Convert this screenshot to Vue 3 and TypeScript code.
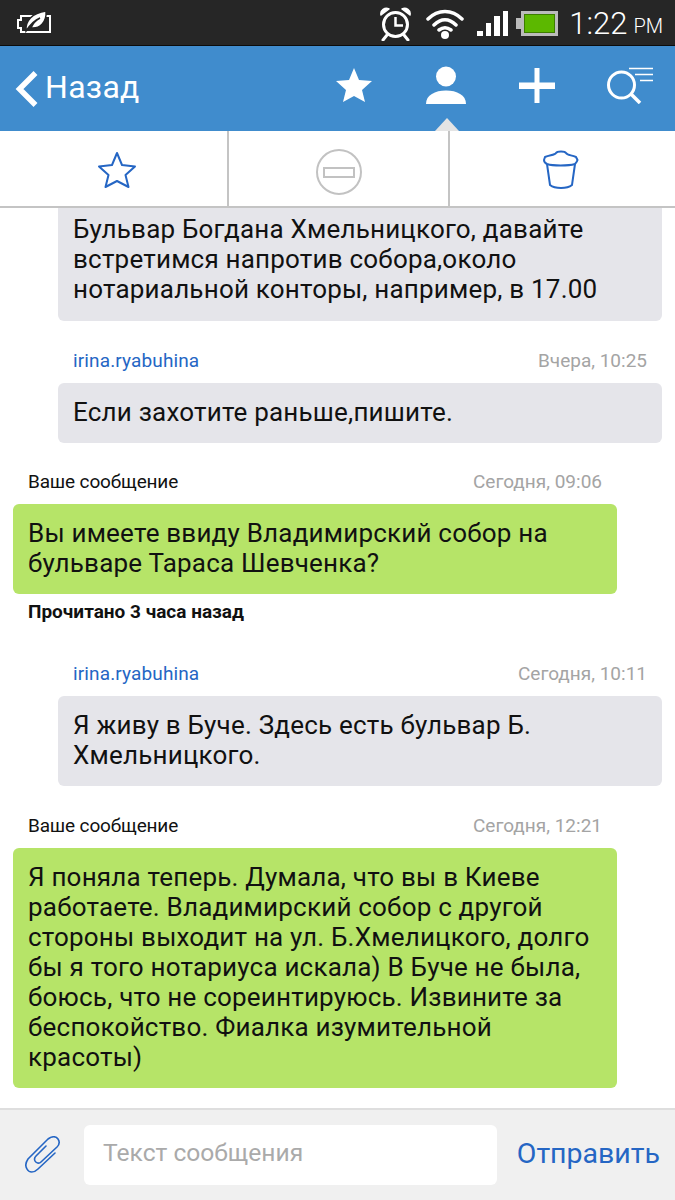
<script setup lang="ts">
interface Msg { mine: boolean; author?: string; time?: string; lines: string[]; read?: string }
const messages: Msg[] = [
  { mine: false, lines: ['Бульвар Богдана Хмельницкого, давайте', 'встретимся напротив собора,около', 'нотариальной конторы, например, в 17.00'] },
  { mine: false, author: 'irina.ryabuhina', time: 'Вчера, 10:25', lines: ['Если захотите раньше,пишите.'] },
  { mine: true, author: 'Ваше сообщение', time: 'Сегодня, 09:06', lines: ['Вы имеете ввиду Владимирский собор на', 'бульваре Тараса Шевченка?'], read: 'Прочитано 3 часа назад' },
  { mine: false, author: 'irina.ryabuhina', time: 'Сегодня, 10:11', lines: ['Я живу в Буче. Здесь есть бульвар Б.', 'Хмельницкого.'] },
  { mine: true, author: 'Ваше сообщение', time: 'Сегодня, 12:21', lines: ['Я поняла теперь. Думала, что вы в Киеве', 'работаете. Владимирский собор с другой', 'стороны выходит на ул. Б.Хмелицкого, долго', 'бы я того нотариуса искала) В Буче не была,', 'боюсь, что не сореинтируюсь. Извините за', 'беспокойство. Фиалка изумительной', 'красоты)'] }
]
</script>

<template>
  <div class="page">
    <header class="status">
      <svg class="leaf" width="36" height="24" viewBox="0 0 36 24">
        <path d="M5 6H34V22H5V18H2V10H5Z" fill="none" stroke="#fff" stroke-width="2" />
        <path d="M10 21C9 11 16 3 30 1C31 12 24 19 15 18C17 13 20 10 24 8C19 10 14 15 10 21Z" fill="#fff" stroke="#242424" stroke-width="1.500" />
      </svg>
      <div class="status-right">
        <svg width="33" height="34" viewBox="0 0 33 34">
          <circle cx="16.500" cy="17.500" r="12" fill="none" stroke="#fff" stroke-width="3" />
          <path d="M16.500 10V18.500H24" fill="none" stroke="#fff" stroke-width="2.500" />
          <path d="M2 8C1 3 6 0 10 2ZM31 8C32 3 27 0 23 2Z" fill="#fff" stroke="#fff" stroke-width="1.500" stroke-linejoin="round" />
          <path d="M8 28L4 33M25 28L29 33" stroke="#fff" stroke-width="3" stroke-linecap="round" />
        </svg>
        <svg class="wifi" width="38" height="32" viewBox="0 0 38 32">
          <path d="M2 11C12 1 26 1 36 11M8 17C15 10 23 10 30 17M13 22C17 19 21 19 25 22" fill="none" stroke="#fff" stroke-width="3.500" stroke-linecap="round" />
          <circle cx="19" cy="27" r="4" fill="#fff" />
        </svg>
        <div class="bars">
          <i class="b1"></i><i class="b2"></i><i class="b3"></i><i class="b4"></i>
        </div>
        <svg class="batt" width="42" height="25" viewBox="0 0 42 25">
          <rect x="5" y="0" width="37" height="25" fill="#bbb" />
          <rect x="0" y="7" width="6" height="11" fill="#bbb" />
          <rect x="8.500" y="3.500" width="30" height="18" fill="#5cb800" stroke="#3d7d00" />
        </svg>
        <span class="clock">1:22</span><span class="ampm">PM</span>
      </div>
    </header>

    <nav class="nav">
      <div class="back">
        <svg class="chev" width="24" height="40" viewBox="0 0 24 40">
          <path d="M20.500 4L4.500 20L20.500 36" fill="none" stroke="#fff" stroke-width="5.500" />
        </svg>
        <span>Назад</span>
      </div>
      <div class="nav-icons">
        <svg class="ni" width="38" height="36" viewBox="0 0 38 36">
          <path d="M19 1L24 13L37 14L27 23L30 35L19 29L8 35L11 23L1 14L14 13Z" fill="#fff" />
        </svg>
        <svg class="ni" width="42" height="40" viewBox="0 0 42 40">
          <circle cx="21" cy="11.500" r="10" fill="#fff" />
          <path d="M1 39C1 30 10 25.500 21 25.500C32 25.500 41 30 41 39Z" fill="#fff" />
        </svg>
        <svg class="ni" width="36" height="36" viewBox="0 -1 36 36">
          <path d="M15.500 0H20.500V14.500H36V21H20.500V35H15.500V21H0V14.500H15.500Z" fill="#fff" />
        </svg>
        <svg width="48" height="38" viewBox="0 0 48 38">
          <circle cx="15.500" cy="19" r="13" fill="none" stroke="#fff" stroke-width="3" />
          <path d="M25 28L34 37" stroke="#fff" stroke-width="3.500" />
          <path d="M23 2.500H47M29 8.500H47M34 14.500H47" stroke="#fff" stroke-width="1.500" />
        </svg>
      </div>
      <span class="caret"></span>
    </nav>

    <div class="tools">
      <div class="tool">
        <svg class="t-star" width="40" height="38" viewBox="0 0 40 38">
          <path d="M20 2L25 14L38 15.500L28.500 24L31.500 36L20 30L8.500 36L11.500 24L2 15.500L15 14Z" fill="none" stroke="#2566c4" stroke-width="2" stroke-linejoin="round" />
        </svg>
      </div>
      <div class="tool tool-mid">
        <svg class="t-block" width="46" height="46" viewBox="0 0 46 46">
          <circle cx="23" cy="23" r="22" fill="none" stroke="#c2c2c2" stroke-width="2" />
          <rect x="8" y="19" width="30" height="9" fill="none" stroke="#c2c2c2" stroke-width="2" />
        </svg>
      </div>
      <div class="tool">
        <svg class="t-trash" width="36" height="40" viewBox="0 0 36 40">
          <path d="M13 3C14 1 22 1 23 3C24 5 28 5 33 7L34.500 10C34 12 33 13 32 14C25 16 10 16 4 14C2 13 1 12 1 10L2 7C7 5 12 5 13 3Z" fill="none" stroke="#2566c4" stroke-width="2" stroke-linejoin="round" />
          <path d="M4 14L7 35C12 39 24 39 29 35L32 14" fill="none" stroke="#2566c4" stroke-width="2" />
        </svg>
      </div>
    </div>

    <main class="list">
      <section v-for="(m, i) in messages" :key="i" class="msg" :class="{ mine: m.mine, first: i === 0 }">
        <div v-if="m.author" class="meta">
          <span class="author">{{ m.author }}</span>
          <span class="time">{{ m.time }}</span>
        </div>
        <div class="bubble">
          <div v-for="l in m.lines" :key="l">{{ l }}</div>
        </div>
        <div v-if="m.read" class="read">{{ m.read }}</div>
      </section>
    </main>

    <footer class="composer">
      <svg class="clip" width="36" height="38" viewBox="10 10 36 38">
        <path d="M40 27L23 43C19 47 14 47 12 43C10 40 11 36 13 33L33 13C37 10 41 10 43 13C45 16 44 19 42 21L26 36C24 38 21 37 20 35C19 33 20 31 21 30L31 20" fill="none" stroke="#2566c4" stroke-width="1.600" stroke-linecap="round" />
      </svg>
      <div class="input"><span class="ph">Текст сообщения</span></div>
      <span class="send">Отправить</span>
    </footer>
  </div>
</template>

<style>
body { margin: 0; }
</style>

<style scoped>
.page {
  width: 675px;
  height: 1200px;
  overflow: hidden;
  display: flex;
  flex-direction: column;
  background: #fff;
  font-family: Roboto, "Noto Sans", sans-serif;
  color: #111;
}
.status {
  height: 46px;
  flex: none;
  box-sizing: border-box;
  background: #262626;
  border-bottom: 1px solid #0c0c0c;
  display: flex;
  align-items: center;
  justify-content: space-between;
  padding: 2px 12px 0 16px;
}
.leaf { margin-top: -4px; }
.status-right { display: flex; align-items: center; }
.status-right svg { flex: none; }
.wifi { margin-left: 14px; }
.bars { display: flex; align-items: flex-end; gap: 3px; height: 25px; margin-left: 13px; }
.bars i { display: block; width: 5.5px; background: #fff; }
.b1 { height: 5px; }
.b2 { height: 13px; }
.b3 { height: 20px; }
.b4 { height: 25px; }
.batt { margin-left: 8px; }
.clock { color: #fff; font-size: 31px; font-weight: 300; margin-left: 11px; line-height: 1; }
.ampm { color: #fff; font-size: 20px; font-weight: 300; margin-left: 6px; margin-top: 5px; }
.nav {
  position: relative;
  height: 85px;
  flex: none;
  box-sizing: border-box;
  background: #408ccd;
  display: flex;
  align-items: center;
  justify-content: space-between;
  padding: 0 0 4px 15px;
}
.back { display: flex; align-items: center; gap: 6px; color: #fff; font-size: 32px; letter-spacing: 0.3px; }
.chev { margin-top: 4px; }
.nav-icons { display: flex; align-items: center; margin: 0 21px 4px 0; }
.ni { margin-right: 52px; }
.ni:nth-child(3) { margin-right: 51px; }
.caret {
  position: absolute;
  left: 435px;
  bottom: 0;
  border-left: 12px solid transparent;
  border-right: 12px solid transparent;
  border-bottom: 13px solid #e4e4e4;
}
.tools {
  height: 77px;
  flex: none;
  box-sizing: border-box;
  border-bottom: 2px solid #c4c4c4;
  display: grid;
  grid-template-columns: 227px 223px 1fr;
}
.tool { display: flex; align-items: center; justify-content: center; }
.tool-mid { border-left: 2px solid #c4c4c4; border-right: 2px solid #c4c4c4; }
.t-star { margin: 3px 0 0 6px; }
.t-block { margin-top: 6px; }
.t-trash { margin: 2px 4px 0 0; }
.list { flex: 1; overflow: hidden; display: flex; flex-direction: column; }
.msg { padding: 0 13px 0 58px; margin-top: 25.5px; }
.msg.mine { padding: 0 58px 0 13px; }
.msg.first { margin-top: 0; }
.meta {
  height: 27px;
  display: flex;
  align-items: center;
  justify-content: space-between;
  padding: 0 15px;
  margin-bottom: 9px;
  font-size: 19px;
}
.author { color: #2566c4; letter-spacing: 0.13px; }
.mine .author { color: #111; letter-spacing: -0.15px; }
.time { color: #a4a4a4; }
.bubble {
  background: #e5e5ea;
  border-radius: 6px;
  padding: 14px 15px 16px;
  font-size: 26px;
  line-height: 30px;
  letter-spacing: 0.2px;
  white-space: nowrap;
}
.first .bubble { border-radius: 0 0 6px 6px; padding: 6px 15px 17px; }
.mine .bubble { background: #b6e468; }
.read { font-size: 19px; font-weight: 700; padding: 8px 15px 0; line-height: 20px; margin-bottom: 12.5px; }
.composer {
  height: 92px;
  flex: none;
  box-sizing: border-box;
  background: #f0f0f0;
  border-top: 2px solid #dedede;
  display: flex;
  align-items: center;
  padding: 0 15px 0 25px;
}
.clip { flex: none; }
.input {
  width: 413px;
  height: 60px;
  box-sizing: border-box;
  margin: 0 1px 0 23px;
  background: #fff;
  border-radius: 6px;
  padding: 0 0 5px 19px;
  display: flex;
  align-items: center;
  color: #aaa;
  font-size: 24.6px;
}
.send { margin: 0 0 4px 19px; color: #2566c4; font-size: 28.500px; white-space: nowrap; }
</style>
